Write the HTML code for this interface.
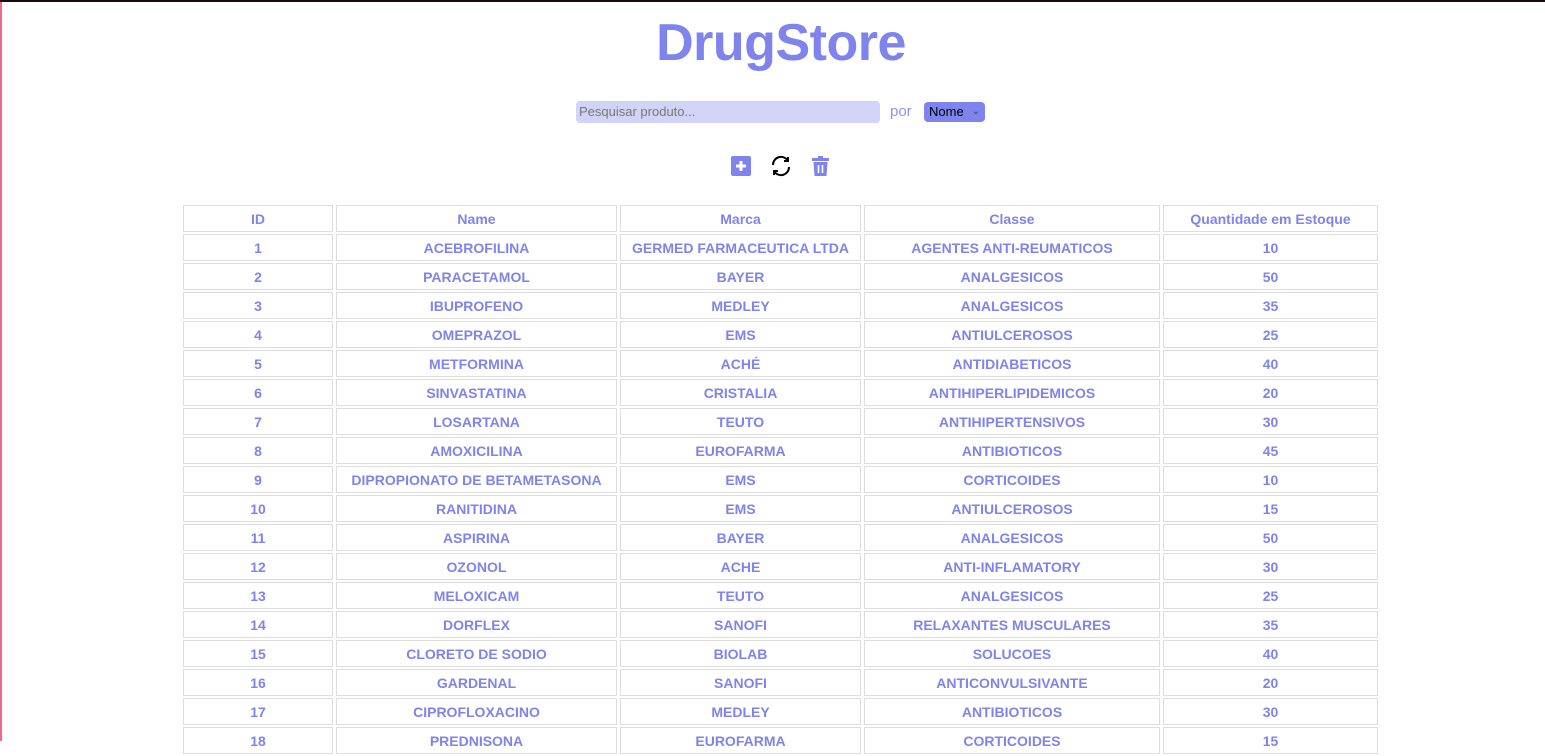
<!DOCTYPE html>
<html><head><meta charset="utf-8"><style>
html,body{margin:0;padding:0;background:#fff;}
body{width:1545px;height:739px;overflow:hidden;position:relative;font-family:"Liberation Sans",sans-serif;color:#7f83ee;border-top:2px solid #1a0a10;box-sizing:border-box;}
.lb{position:absolute;left:0;top:0;width:2px;height:739px;background:#f06a8a;}
h1{position:absolute;top:11px;left:0;width:1562px;text-align:center;margin:0;font-size:52px;font-weight:bold;color:#7f83ee;letter-spacing:-0.5px;}
.search{position:absolute;left:576px;top:99px;width:304px;height:22px;background:#d1d3f7;border-radius:4px;font-size:13px;color:#777;line-height:22px;padding-left:3px;box-sizing:border-box;}
.por{position:absolute;left:890px;top:101px;font-size:15px;color:#8f93f0;}
.sel{position:absolute;left:924px;top:100px;width:61px;height:20px;background:#7f83ee;border-radius:4px;font-size:13px;color:#000;line-height:20px;padding-left:5px;box-sizing:border-box;}
.sel span{position:absolute;right:5px;top:0;color:#444;font-size:10px;}
table{position:absolute;left:180px;top:201px;border-collapse:separate;border-spacing:3px 2px;font-size:14px;font-weight:bold;}
td,th{border:1px solid #ddd;text-align:center;height:25px;padding:0;color:#7f83ee;}
</style></head><body>
<div class="lb"></div>
<h1>DrugStore</h1>
<div class="search">Pesquisar produto...</div>
<div class="por">por</div>
<div class="sel">Nome<span>⌄</span></div>
<svg style="position:absolute;left:731px;top:154px" width="20" height="20" viewBox="0 0 20 20"><rect width="20" height="20" rx="2" fill="#7f83ee"/><path d="M10 5v10M5 10h10" stroke="#fff" stroke-width="3"/></svg>
<svg style="position:absolute;left:770px;top:153px" width="22" height="22" viewBox="0 0 22 22" fill="none" stroke="#000" stroke-width="2"><path d="M3 10a8 8 0 0 1 15-4"/><path d="M18 2v4h-4"/><path d="M19 12a8 8 0 0 1-15 4"/><path d="M4 20v-4h4"/></svg>
<svg style="position:absolute;left:812px;top:154px" width="17" height="20" viewBox="0 0 17 20"><rect x="0" y="2" width="17" height="3" fill="#7f83ee"/><rect x="6" y="0" width="5" height="3" fill="#7f83ee"/><path d="M1.5 6h14l-1 14h-12z" fill="#7f83ee"/><path d="M6.5 9v8M10.5 9v8" stroke="#fff" stroke-width="1.6"/></svg>
<table>
<tr><th style="width:148px">ID</th><th style="width:279px">Name</th><th style="width:239px">Marca</th><th style="width:294px">Classe</th><th style="width:213px">Quantidade em Estoque</th></tr>
<tr><td>1</td><td>ACEBROFILINA</td><td>GERMED FARMACEUTICA LTDA</td><td>AGENTES ANTI-REUMATICOS</td><td>10</td></tr>
<tr><td>2</td><td>PARACETAMOL</td><td>BAYER</td><td>ANALGESICOS</td><td>50</td></tr>
<tr><td>3</td><td>IBUPROFENO</td><td>MEDLEY</td><td>ANALGESICOS</td><td>35</td></tr>
<tr><td>4</td><td>OMEPRAZOL</td><td>EMS</td><td>ANTIULCEROSOS</td><td>25</td></tr>
<tr><td>5</td><td>METFORMINA</td><td>ACHÉ</td><td>ANTIDIABETICOS</td><td>40</td></tr>
<tr><td>6</td><td>SINVASTATINA</td><td>CRISTALIA</td><td>ANTIHIPERLIPIDEMICOS</td><td>20</td></tr>
<tr><td>7</td><td>LOSARTANA</td><td>TEUTO</td><td>ANTIHIPERTENSIVOS</td><td>30</td></tr>
<tr><td>8</td><td>AMOXICILINA</td><td>EUROFARMA</td><td>ANTIBIOTICOS</td><td>45</td></tr>
<tr><td>9</td><td>DIPROPIONATO DE BETAMETASONA</td><td>EMS</td><td>CORTICOIDES</td><td>10</td></tr>
<tr><td>10</td><td>RANITIDINA</td><td>EMS</td><td>ANTIULCEROSOS</td><td>15</td></tr>
<tr><td>11</td><td>ASPIRINA</td><td>BAYER</td><td>ANALGESICOS</td><td>50</td></tr>
<tr><td>12</td><td>OZONOL</td><td>ACHE</td><td>ANTI-INFLAMATORY</td><td>30</td></tr>
<tr><td>13</td><td>MELOXICAM</td><td>TEUTO</td><td>ANALGESICOS</td><td>25</td></tr>
<tr><td>14</td><td>DORFLEX</td><td>SANOFI</td><td>RELAXANTES MUSCULARES</td><td>35</td></tr>
<tr><td>15</td><td>CLORETO DE SODIO</td><td>BIOLAB</td><td>SOLUCOES</td><td>40</td></tr>
<tr><td>16</td><td>GARDENAL</td><td>SANOFI</td><td>ANTICONVULSIVANTE</td><td>20</td></tr>
<tr><td>17</td><td>CIPROFLOXACINO</td><td>MEDLEY</td><td>ANTIBIOTICOS</td><td>30</td></tr>
<tr><td>18</td><td>PREDNISONA</td><td>EUROFARMA</td><td>CORTICOIDES</td><td>15</td></tr>
</table>
</body></html>
